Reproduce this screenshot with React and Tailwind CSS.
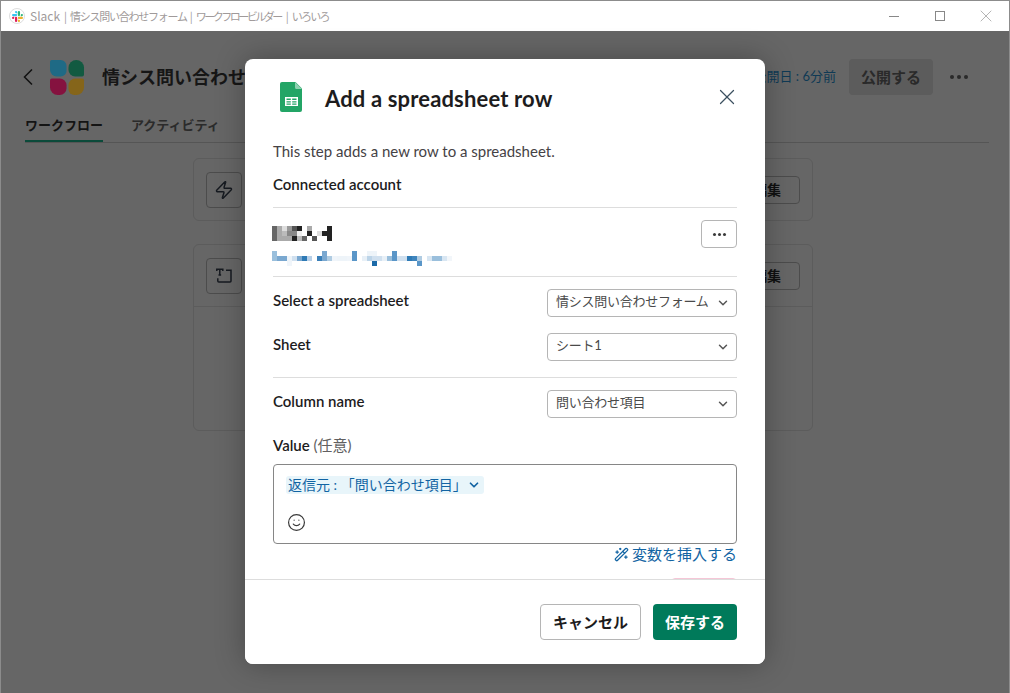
import React from 'react';
import { ChevronDown, Smile, WandSparkles, X, Zap } from 'lucide-react';

const NAME_PIXELS = [
  ['#666', '#aaa', '#ddd', '#999', '#555', '#222', '#fff', '#aaa', '#fff', '#fff', '#fff', '#222'],
  ['#666', '#aaa', '#bbb', '#888', '#888', '#eee', '#fff', '#222', '#fff', '#ddd', '#222', '#222'],
  ['#666', '#aaa', '#aaa', '#aaa', '#222', '#bbb', '#666', '#fff', '#555', '#fff', '#fff', '#222'],
];

// top, main and bottom row of the blurred address, 5px cells
const MAIL_UPPER = { 0: '#9abfdc', 10: '#7aa8d0', 16: '#5a96c8', 19: '#eef4f9', 20: '#eef4f9', 24: '#5a96c8' };
const MAIL_MAIN = [
  '#9abfdc', '#7aa8d0', '#7aa8d0', '#eef4f9', '#d0e0ef', '#7aa8d0', '#2e7ab5', '#b8d0e8', '#fff', '#3a7fb8',
  '#7aa8d0', '#b0cce2', '#f0f5fa', '#eef4f9', '#eef4f9', '#f0f5fa', '#5a96c8', '#fff', '#e8f0f7', '#bcd4e8',
  '#d0e0ef', '#d0e0ef', '#e8f0f7', '#9abfdc', '#5a96c8', '#d0e0ef', '#d0e0ef', '#2e7ab5', '#3f85bd', '#b0cce2',
  '#fff', '#d8e6f2', '#9abfdc', '#9abfdc', '#d8e6f2', '#f2f6fa',
];
const MAIL_LOWER = { 3: '#f0f5fa', 20: '#1c6aa8', 29: '#5a96c8' };

const EDGE_MARKS = [
  { id: 'a', cls: 'top-[235px] h-[27px] bg-[#5b7f9e]' },
  { id: 'b', cls: 'top-[280px] h-[12px] bg-[#555]' },
  { id: 'c', cls: 'top-[317px] h-[10px] bg-[#8a7688]' },
  { id: 'd', cls: 'top-[407px] h-[8px] bg-[#555]' },
  { id: 'e', cls: 'top-[428px] h-[12px] bg-[#555]' },
  { id: 'f', cls: 'top-[457px] h-[14px] bg-[#4f8f72]' },
  { id: 'g', cls: 'top-[476px] h-[15px] bg-[#a89058]' },
];

const Redacted = () => (
  <div className="flex flex-col gap-[10px] -ml-px">
    <svg width="60" height="15" shapeRendering="crispEdges" className="block">
      {NAME_PIXELS.map((row, y) =>
        row.map((c, x) => <rect key={`${x}-${y}`} x={x * 5} y={y * 5} width="5" height="5" fill={c} />)
      )}
    </svg>
    <svg width="180" height="15" shapeRendering="crispEdges" className="block">
      {Object.entries(MAIL_UPPER).map(([x, c]) => <rect key={x} x={x * 5} y="0" width="5" height="5" fill={c} />)}
      {MAIL_MAIN.map((c, x) => <rect key={x} x={x * 5} y="5" width="5" height="5" fill={c} />)}
      {Object.entries(MAIL_LOWER).map(([x, c]) => <rect key={x} x={x * 5} y="10" width="5" height="5" fill={c} />)}
    </svg>
  </div>
);

const SlackMark = () => (
  <svg width="11" height="11" viewBox="0 0 54 54">
    <path fill="#36C5F0" d="M20 0a5.500 5.500 0 0 0 0 11h5.500V5.500A5.500 5.500 0 0 0 20 0zM5.500 14.500a5.500 5.500 0 0 0 0 11H20a5.500 5.500 0 0 0 0-11z" />
    <path fill="#2EB67D" d="M54 20a5.500 5.500 0 0 0-11 0v5.500h5.500A5.500 5.500 0 0 0 54 20zM39.500 20V5.500a5.500 5.500 0 0 0-11 0V20a5.500 5.500 0 0 0 11 0z" />
    <path fill="#ECB22E" d="M34 54a5.500 5.500 0 0 0 0-11h-5.500v5.500A5.500 5.500 0 0 0 34 54zM34 39.500h14.500a5.500 5.500 0 0 0 0-11H34a5.500 5.500 0 0 0 0 11z" />
    <path fill="#E01E5A" d="M0 34a5.500 5.500 0 0 0 11 0v-5.500H5.500A5.500 5.500 0 0 0 0 34zM14.500 34v14.500a5.500 5.500 0 0 0 11 0V34a5.500 5.500 0 0 0-11 0z" />
  </svg>
);

const WorkflowLogo = () => (
  <svg width="35" height="35" viewBox="0 0 36 36">
    <path fill="#1f6a85" d="M2 0h9a6 6 0 0 1 6 6v5a6 6 0 0 1-6 6H7a7 7 0 0 1-7-7V2a2 2 0 0 1 2-2z" />
    <path fill="#125a41" d="M27 0a8 8 0 0 1 8 8v7a2 2 0 0 1-2 2h-7a7 7 0 0 1-7-7V8a8 8 0 0 1 8-8z" />
    <path fill="#85123f" d="M2 19h8a7 7 0 0 1 7 7v3a7 7 0 0 1-7 7H8a8 8 0 0 1-8-8v-7a2 2 0 0 1 2-2z" />
    <path fill="#85651a" d="M26 19h7a2 2 0 0 1 2 2v7a8 8 0 0 1-8 8h-2a6 6 0 0 1-6-6v-4a7 7 0 0 1 7-7z" />
  </svg>
);

const SheetsIcon = () => (
  <svg width="22" height="30" viewBox="0 0 22 30">
    <path fill="#23a566" d="M2 0h13.500L22 6.500V28a2 2 0 0 1-2 2H2a2 2 0 0 1-2-2V2a2 2 0 0 1 2-2z" />
    <path fill="#8ed1b1" d="M15 0l7 7h-5.500A1.500 1.500 0 0 1 15 5.500z" />
    <path fill="#fff" fillRule="evenodd" d="M5 15h13v9H5zM6.500 16.500v1.500h4.300v-1.500zM12.200 16.500v1.500h4.300v-1.500zM6.500 19.200v1.200h4.300v-1.200zM12.200 19.200v1.200h4.300v-1.200zM6.500 21.500v1.200h4.300v-1.200zM12.200 21.500v1.200h4.300v-1.200z" />
  </svg>
);

const TextBoxIcon = () => (
  <svg width="16" height="16" viewBox="0 0 16 16" fill="none" stroke="#161a20" strokeWidth="1.500">
    <path d="M0.800 3V1.200h6V3M3.800 1.200V7M2.500 7h2.600" />
    <path d="M10 2.200h5V13a1 1 0 0 1-1 1H2.800a1 1 0 0 1-1-1v-2.800" />
  </svg>
);

const Dots = ({ color, size, gap }) => (
  <div className={`flex ${gap}`}>
    <span className={`${size} rounded-full ${color}`} />
    <span className={`${size} rounded-full ${color}`} />
    <span className={`${size} rounded-full ${color}`} />
  </div>
);

const Select = ({ value }) => (
  <div className="w-[190px] h-7 flex items-center justify-between pl-2 pr-[6px] border border-[#b5b5b5] rounded text-[13px] tracking-[-0.25px] text-[#4a4a4a] bg-white">
    <span className="whitespace-nowrap -mt-[2px]">{value}</span>
    <ChevronDown size={14} strokeWidth={2.5} className="text-[#555] shrink-0" />
  </div>
);

const Field = ({ label, value, className }) => (
  <div className={`flex items-center justify-between ${className}`}>
    <span className="text-[15px] font-semibold text-[#1d1c1d] -mt-[6px]">{label}</span>
    <Select value={value} />
  </div>
);

const WorkflowCard = ({ icon, className, children }) => (
  <div className={`w-[620px] border border-[#5c5c5c] rounded-md ${className}`}>
    <div className="flex items-center justify-between h-[61px] pl-3 pr-3">
      <div className="w-9 h-9 border border-[#4c4c4c] rounded flex items-center justify-center">{icon}</div>
      <div className="w-[66px] h-7 border border-[#4c4c4c] rounded flex items-center justify-center text-[14px] font-bold text-[#111]">編集</div>
    </div>
    {children}
  </div>
);

export default function App() {
  return (
    <div className="relative w-[1010px] h-[693px] overflow-hidden flex flex-col border-t-[1px] border-x-[1px] border-[#8c8c8c] [font-family:Lato,'Noto_Sans_CJK_JP',sans-serif]">
      {/* Window title bar */}
      <div className="h-[30px] shrink-0 bg-white flex items-center pl-[8px] text-[#a09a9a] font-['Noto_Sans_CJK_JP'] whitespace-nowrap">
        <div className="w-4 h-4 rounded-full border border-[#ddd] flex items-center justify-center">
          <SlackMark />
        </div>
        <span className="ml-[5px] text-[12px]">Slack</span>
        <span className="ml-[4px] text-[11px]">|</span>
        <span className="ml-[3px] text-[11px] tracking-[-1.25px]">情シス問い合わせフォーム</span>
        <span className="ml-[3px] text-[11px]">|</span>
        <span className="ml-[3px] text-[11px] tracking-[-2.5px]">ワークフロービルダー</span>
        <span className="ml-[5px] text-[11px]">|</span>
        <span className="ml-[3px] text-[11px] tracking-[-1.75px]">いろいろ</span>
        <div className="ml-auto flex items-center text-[#888]">
          <div className="w-[46px] flex justify-center"><span className="w-[10px] h-px bg-[#888]" /></div>
          <div className="w-[46px] flex justify-center"><span className="w-[10px] h-[10px] border border-[#888]" /></div>
          <div className="w-[46px] flex justify-center"><X size={20} strokeWidth={0.75} /></div>
        </div>
      </div>

      {/* Page behind the dialog */}
      <div className="flex-1 bg-[#666] pl-6 pr-5">
        <div className="flex items-center h-[36px] mt-[28px] relative">
          <svg width="10" height="16" viewBox="0 0 10 16" fill="none" stroke="#111" strokeWidth="1.500" className="-ml-[2px]">
            <path d="M9 .5 1.500 8 9 15.500" />
          </svg>
          <div className="ml-[17px]"><WorkflowLogo /></div>
          <span className="ml-[17px] text-[18px] font-bold text-[#161616] whitespace-nowrap">情シス問い合わせフォーム</span>
          <span className="ml-auto text-[13px] text-[#0f3a55]">公開日 : 6分前</span>
          <div className="ml-[13px] w-[84px] h-9 rounded bg-[#5c5c5c] flex items-center justify-center text-[15px] font-bold text-[#2a2a2a]">公開する</div>
          <div className="ml-[17px] mr-[21px]"><Dots color="bg-[#2a2a2a]" size="w-[4px] h-[4px]" gap="gap-[3px]" /></div>
        </div>
        <div className="flex gap-7 h-[48px] border-b border-[#555] items-end text-[13px] font-bold">
          <span className="h-[33px] pt-[7px] border-b-2 border-[#0b4a3a] text-[#141414]">ワークフロー</span>
          <span className="h-[33px] pt-[7px] text-[#2b2b2b]">アクティビティ</span>
        </div>
        <div className="flex flex-col items-center mt-[15px] pr-2">
          <WorkflowCard icon={<Zap size={20} strokeWidth={1.75} className="text-[#161a20]" />} className="h-[63px]" />
          <WorkflowCard icon={<TextBoxIcon />} className="h-[187px] mt-[23px]">
            <div className="border-t border-[#5c5c5c]" />
          </WorkflowCard>
        </div>
      </div>

      {/* Colour fringe of the window behind, on the left edge */}
      {EDGE_MARKS.map(m => <span key={m.id} className={`absolute -left-px w-px ${m.cls}`} />)}

      {/* Dialog */}
      <div className="absolute left-[244px] top-[58px] w-[520px] h-[605px] bg-white rounded-lg shadow-[0_0_30px_rgba(0,0,0,0.3)] flex flex-col overflow-hidden">
        <div className="h-[82px] shrink-0 flex items-start pl-[35px] pr-7 pt-[23px]">
          <SheetsIcon />
          <h1 className="ml-[23px] mt-[1px] text-[22px] leading-[32px] font-bold tracking-[0.15px] text-[#1d1c1d]">Add a spreadsheet row</h1>
          <X size={26} strokeWidth={1.15} className="ml-auto mt-[2px] -mr-[3px] text-[#3c5060]" />
        </div>

        <div className="flex-1 min-h-0 overflow-hidden px-7 relative">
          <p className="text-[15px] leading-[22px] text-[#454245] -mt-[1px]">This step adds a new row to a spreadsheet.</p>
          <p className="text-[15px] leading-[22px] font-semibold text-[#1d1c1d] mt-[11px] pb-[12px] border-b border-[#ddd]">Connected account</p>

          <div className="h-[69px] flex items-start justify-between border-b border-[#ddd] pt-[18px]">
            <Redacted />
            <div className="w-9 h-7 -mt-[6px] border border-[#b5b5b5] rounded flex items-center justify-center"><Dots color="bg-[#3a3a3a]" size="w-[3px] h-[3px]" gap="gap-[2px]" /></div>
          </div>

          <Field label="Select a spreadsheet" value="情シス問い合わせフォーム" className="mt-3" />
          <Field label="Sheet" value="シート1" className="mt-4" />
          <div className="border-t border-[#ddd] mt-4" />
          <Field label="Column name" value="問い合わせ項目" className="mt-3" />

          <p className="mt-[16px] text-[15px] leading-[22px] font-semibold text-[#1d1c1d]">Value <span className="font-normal text-[#616061]">(任意)</span></p>
          <div className="mt-[8px] h-[80px] border border-[#868686] rounded flex flex-col items-start pl-[12px] pt-[11px]">
            <span className="w-[198px] h-[18px] pl-[2px] pr-[3px] pb-[2px] bg-[#e8f5fa] rounded-[3px] flex items-center justify-between text-[14px] text-[#1264a3] whitespace-nowrap">
              返信元 : 「問い合わせ項目」
              <ChevronDown size={14} strokeWidth={3} className="mt-[2px]" />
            </span>
            <Smile size={19} strokeWidth={1.5} className="text-[#3a3a3a] mt-[19px] ml-[1px]" />
          </div>
          <div className="flex items-center justify-end gap-[3px] h-[22px] -mt-[1px] text-[15px] text-[#1264a3]">
            <WandSparkles size={15} strokeWidth={2} />
            <span>変数を挿入する</span>
          </div>
          {/* pink button scrolled under the footer */}
          <div className="absolute right-7 bottom-[-30px] w-[66px] h-[31px] rounded border border-[#f5c6d6]" />
        </div>

        <div className="h-[85px] shrink-0 border-t border-[#ddd] bg-white flex items-start justify-end gap-3 pt-6 pr-7 relative">
          <div className="w-[101px] h-9 border border-[#b5b5b5] rounded flex items-center justify-center text-[15px] font-bold text-[#1d1c1d]">キャンセル</div>
          <div className="w-[84px] h-9 rounded bg-[#007a5a] flex items-center justify-center text-[15px] font-bold text-white">保存する</div>
        </div>
      </div>
    </div>
  );
}
